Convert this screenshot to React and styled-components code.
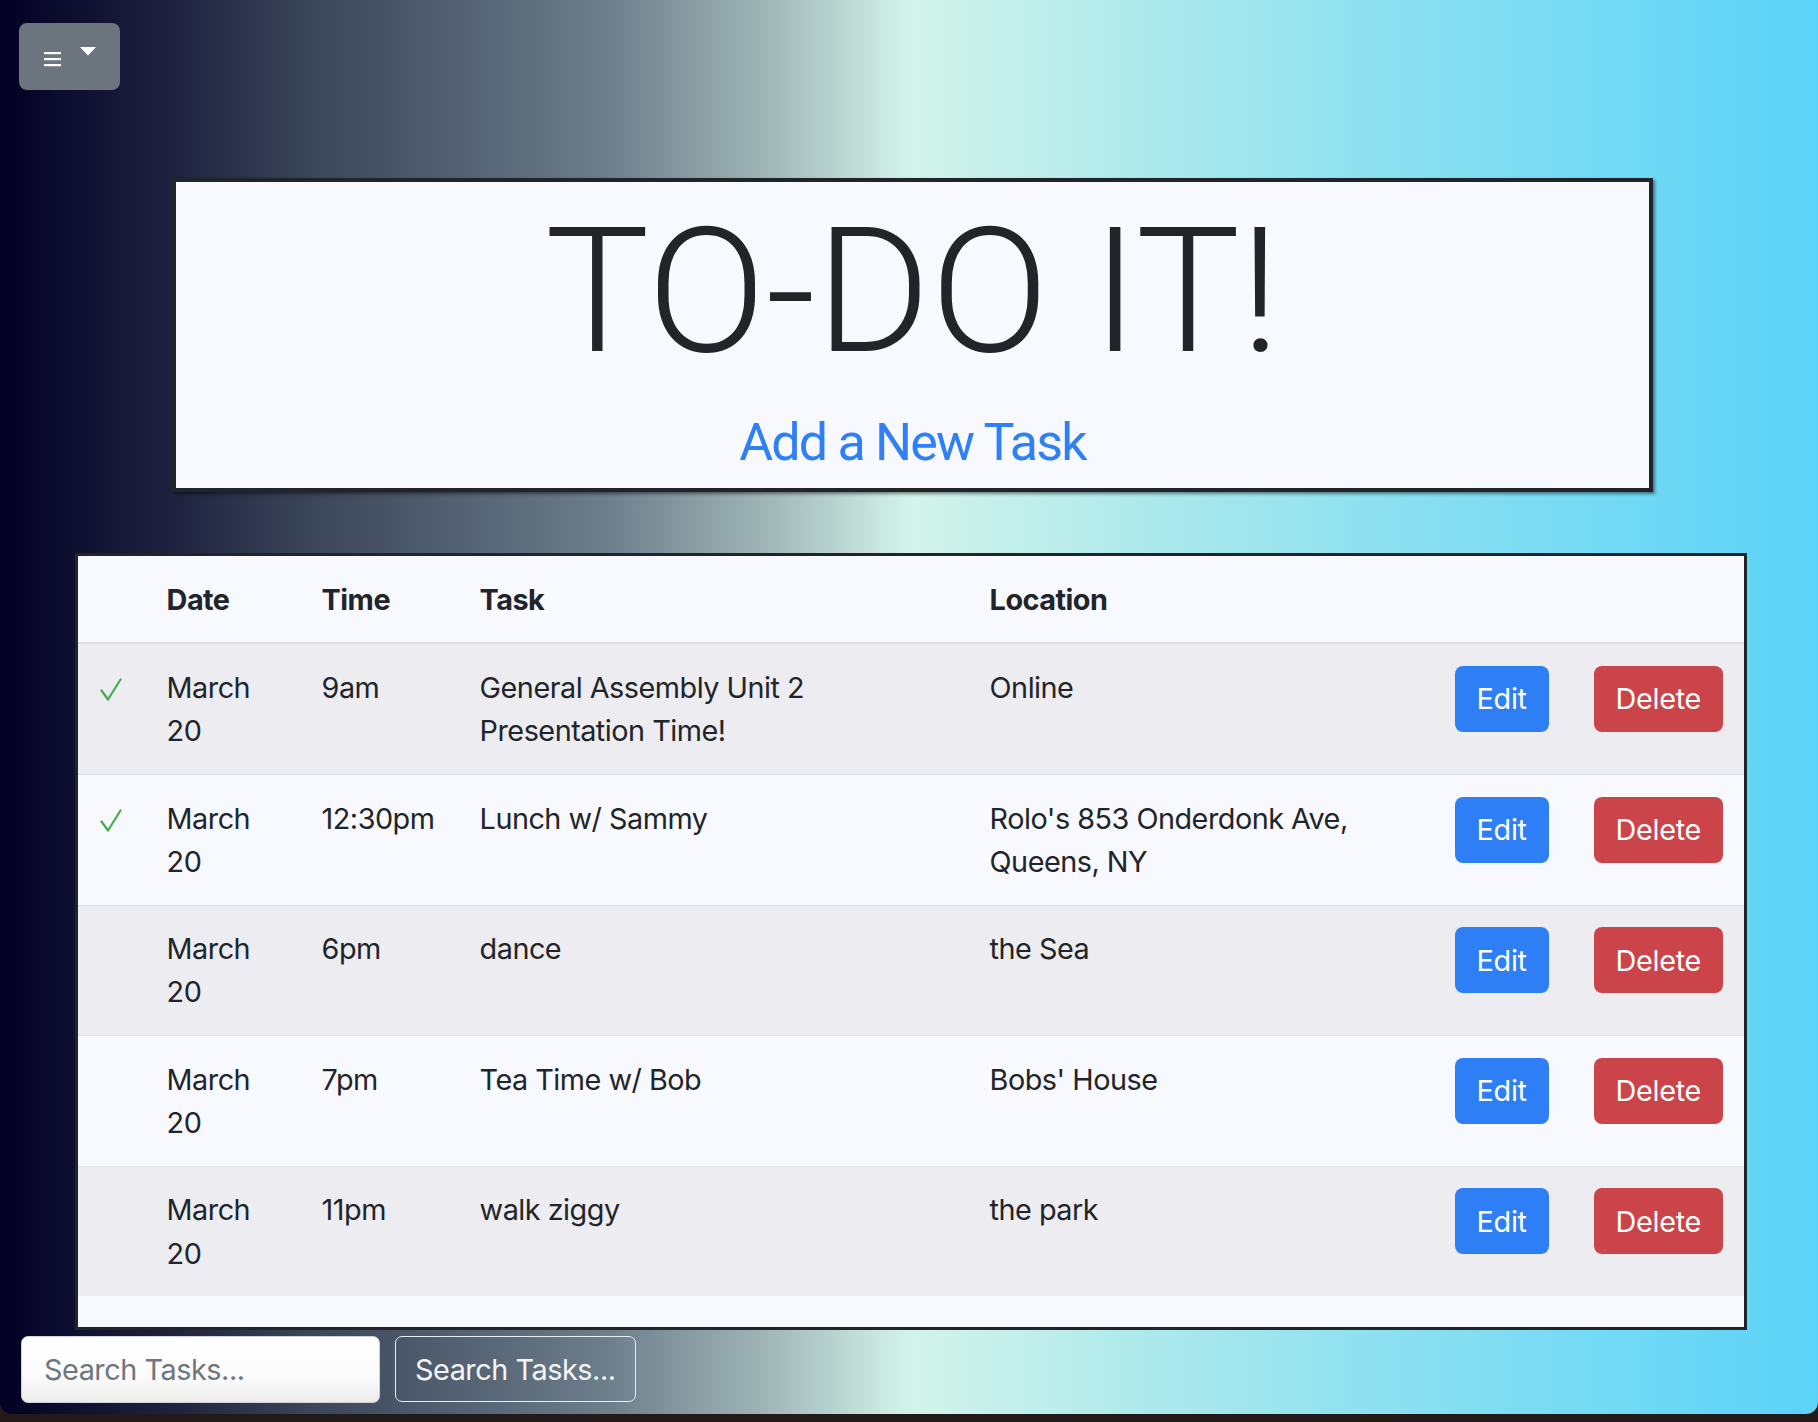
import React from "react";
import styled, { createGlobalStyle } from "styled-components";

const GlobalStyle = createGlobalStyle`
  html, body {
    margin: 0;
    padding: 0;
    background: #231919;
  }
  body {
    font-family: Inter, "Open Sans", "Liberation Sans", sans-serif;
    color: #212529;
  }
  * { box-sizing: border-box; }
`;

const Page = styled.div`
  height: 1414px;
  background: linear-gradient(
    90deg,
    #020024 0%,
    #202441 10%,
    #3a4558 17%,
    #6b7c8a 33%,
    #9fb5b6 42%,
    #d3f4ea 50%,
    #b0eaeb 62%,
    #8fe1f0 75%,
    #5bd3f8 100%
  );
  border-radius: 0 0 12px 12px;
  padding: 23px 0 0 0;
  display: flex;
  flex-direction: column;
  align-items: flex-start;
  overflow: hidden;
`;

const MenuButton = styled.button`
  margin-left: 19px;
  width: 101px;
  height: 67px;
  border: none;
  border-radius: 8px;
  background: #6c757d;
  display: flex;
  align-items: center;
  justify-content: center;
  gap: 18px;
  padding: 0;
  cursor: pointer;
`;

const HeaderCard = styled.section`
  margin: 88px 0 0 172px;
  width: 1481px;
  height: 314px;
  border: 4px solid #212529;
  box-shadow: 2px 2px 3px rgba(0, 0, 0, 0.45);
  background: #f8f8ff;
  display: flex;
  flex-direction: column;
  align-items: center;
  padding-top: 22px;
`;

const Title = styled.h1`
  margin: 0;
  font-family: Roboto, "Liberation Sans", sans-serif;
  font-weight: 300;
  font-size: 175px;
  line-height: 1;
  letter-spacing: 0;
  color: #212529;
`;

const AddLink = styled.a`
  margin-top: 33px;
  font-family: Roboto, "Liberation Sans", sans-serif;
  font-size: 52px;
  line-height: 1.2;
  font-weight: 400;
  letter-spacing: -1.8px;
  color: #2f80f6;
  text-decoration: none;
`;

const TableCard = styled.div`
  margin: 61px 0 0 75px;
  width: 1672px;
  border: 3px solid #212529;
  background: #f8f8ff;
  padding-bottom: 31px;
`;

const Table = styled.table`
  width: 100%;
  table-layout: fixed;
  border-collapse: collapse;
  font-size: 28.8px;
  line-height: 43.2px;
  letter-spacing: -0.5px;
  color: #212529;
`;

const HeadCell = styled.th`
  text-align: left;
  font-weight: 700;
  padding: 21.6px;
  border-bottom: 2px solid #dddee3;
`;

const Row = styled.tr`
  background: ${(p) => (p.$striped ? "#ececf1" : "#f8f8ff")};
  border-bottom: ${(p) => (p.$last ? "none" : "1.8px solid #e1e2e7")};
`;

const Cell = styled.td`
  vertical-align: top;
  padding: 21.6px;
  font-weight: 400;
  overflow-wrap: normal;
`;

const CheckCell = styled.td`
  vertical-align: top;
  padding: 21.6px 0 0 21.6px;
`;

const ActionButton = styled.button`
  font-family: Inter, "Liberation Sans", sans-serif;
  font-size: 28.8px;
  line-height: 43.2px;
  letter-spacing: -0.3px;
  height: 66px;
  padding: 0 22px;
  border: none;
  border-radius: 8px;
  color: #ffffff;
  white-space: nowrap;
  background: ${(p) => (p.$variant === "danger" ? "#cb444a" : "#2e7ff6")};
  cursor: pointer;
`;

const SearchBar = styled.form`
  margin: 6px 0 0 21px;
  display: flex;
  gap: 15px;
`;

const SearchInput = styled.input`
  width: 359px;
  height: 67px;
  border: 1.5px solid #cfd3d8;
  border-radius: 7px;
  background: linear-gradient(180deg, #ffffff 0%, #fbfbfb 60%, #ececec 100%);
  padding: 0 22px;
  font-family: Inter, "Liberation Sans", sans-serif;
  font-size: 28.8px;
  letter-spacing: -0.45px;
  color: #212529;
  &::placeholder {
    color: #6f767d;
  }
  &:focus {
    outline: none;
  }
`;

const SearchButton = styled.button`
  height: 66px;
  padding: 0 19px;
  border: 1.8px solid #e9eef2;
  border-radius: 7px;
  background: transparent;
  color: #f3f5f7;
  font-family: Inter, "Liberation Sans", sans-serif;
  font-size: 28.8px;
  line-height: 43.2px;
  letter-spacing: -0.45px;
  cursor: pointer;
`;

const HamburgerIcon = () => (
  <svg width="18" height="16" viewBox="0 0 18 16" style={{ marginTop: 4 }}>
    <rect x="0" y="1" width="17" height="2.2" fill="#fff" />
    <rect x="0" y="7" width="17" height="2.2" fill="#fff" />
    <rect x="0" y="13" width="17" height="2.2" fill="#fff" />
  </svg>
);

const CaretIcon = () => (
  <svg width="16" height="9" viewBox="0 0 16 9" style={{ marginTop: -10 }}>
    <polygon points="0,0 16,0 8,8.5" fill="#fff" />
  </svg>
);

const CheckIcon = () => (
  <svg width="22" height="24" viewBox="0 0 22 24" style={{ marginTop: 12 }}>
    <polyline
      points="1.5,12.5 8,21.5 20.5,1.5"
      fill="none"
      stroke="#46ad4c"
      strokeWidth="2.2"
      strokeLinecap="round"
      strokeLinejoin="round"
    />
  </svg>
);

const tasks = [
  { done: true, date: "March 20", time: "9am", task: "General Assembly Unit 2 Presentation Time!", location: "Online" },
  { done: true, date: "March 20", time: "12:30pm", task: "Lunch w/ Sammy", location: "Rolo's 853 Onderdonk Ave, Queens, NY" },
  { done: false, date: "March 20", time: "6pm", task: "dance", location: "the Sea" },
  { done: false, date: "March 20", time: "7pm", task: "Tea Time w/ Bob", location: "Bobs' House" },
  { done: false, date: "March 20", time: "11pm", task: "walk ziggy", location: "the park" },
];

export default function App() {
  return (
    <>
      <GlobalStyle />
      <Page>
        <MenuButton aria-label="menu">
          <HamburgerIcon />
          <CaretIcon />
        </MenuButton>

        <HeaderCard>
          <Title>TO-DO IT!</Title>
          <AddLink href="#">Add a New Task</AddLink>
        </HeaderCard>

        <TableCard>
          <Table>
            <colgroup>
              <col style={{ width: 67 }} />
              <col style={{ width: 155 }} />
              <col style={{ width: 158 }} />
              <col style={{ width: 510 }} />
              <col style={{ width: 465 }} />
              <col style={{ width: 139 }} />
              <col style={{ width: 172 }} />
            </colgroup>
            <thead>
              <tr>
                <HeadCell />
                <HeadCell>Date</HeadCell>
                <HeadCell>Time</HeadCell>
                <HeadCell>Task</HeadCell>
                <HeadCell>Location</HeadCell>
                <HeadCell />
                <HeadCell />
              </tr>
            </thead>
            <tbody>
              {tasks.map((t, i) => (
                <Row key={i} $striped={i % 2 === 0} $last={i === tasks.length - 1}>
                  <CheckCell>{t.done ? <CheckIcon /> : null}</CheckCell>
                  <Cell>{t.date}</Cell>
                  <Cell>{t.time}</Cell>
                  <Cell>{t.task}</Cell>
                  <Cell>{t.location}</Cell>
                  <Cell>
                    <ActionButton>Edit</ActionButton>
                  </Cell>
                  <Cell>
                    <ActionButton $variant="danger">Delete</ActionButton>
                  </Cell>
                </Row>
              ))}
            </tbody>
          </Table>
        </TableCard>

        <SearchBar onSubmit={(e) => e.preventDefault()}>
          <SearchInput placeholder="Search Tasks..." />
          <SearchButton type="submit">Search Tasks...</SearchButton>
        </SearchBar>
      </Page>
    </>
  );
}
